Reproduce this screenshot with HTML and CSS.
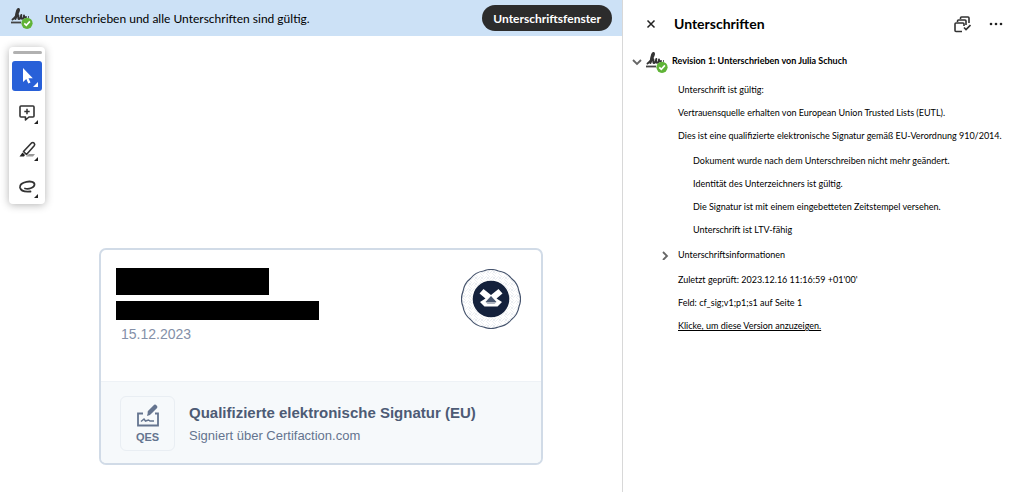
FILE: index.html
```
<!DOCTYPE html>
<html lang="de">

<head>
    <meta charset="UTF-8">
    <meta name="viewport" content="width=device-width, initial-scale=1.0">
    <title>Unterschriften</title>
    <link rel="stylesheet" href="styles.css">
</head>

<body>
    <!-- Shared signature icon -->
    <svg class="sprite" aria-hidden="true">
        <symbol id="signed" viewBox="0 0 22 22">
            <path d="M1.500 12.500C4 11 8.500 5 8 2.500C7 0 5 5 4.500 12C5.500 9 6.500 7.500 7.300 8C8 8.500 6.500 12 8 12C9.500 12 10 9.500 10.300 8C10 10.500 10 12 11.200 11.800C12.500 11.500 13 9.500 13 8.500C13 10.500 14 11 15 10" fill="none" stroke="#333" stroke-width="1.900" stroke-linecap="round" stroke-linejoin="round"/>
            <path d="M17 10h1" stroke="#333" stroke-width="1.600"/>
            <path d="M0 15.500h10" stroke="#444" stroke-width="1.800"/>
            <circle cx="16" cy="16.300" r="5.600" fill="#5fb336"/>
            <path d="M13.300 16.400l2 2 3.600-4" fill="none" stroke="#fff" stroke-width="1.600"/>
        </symbol>
    </svg>

    <div class="app">
        <main class="document">
            <header class="banner">
                <svg class="signed-icon"><use href="#signed"/></svg>
                <p class="banner-text">Unterschrieben und alle Unterschriften sind gültig.</p>
                <button class="banner-button" type="button">Unterschriftsfenster</button>
            </header>

            <div class="canvas">
                <div class="toolbar">
                    <span class="handle"></span>
                    <button class="tool active" type="button" aria-label="Auswählen">
                        <svg viewBox="0 0 30 30">
                            <path d="M11 7v14l3.300-3 2 4.600 2.200-1-2-4.400h4.300z" fill="#fff"/>
                            <path d="M26 21v5h-5z" fill="#fff"/>
                        </svg>
                    </button>
                    <button class="tool" type="button" aria-label="Kommentar">
                        <svg viewBox="0 0 30 30">
                            <path d="M9 8h12q1 0 1 1v9q0 1-1 1h-4l-3.500 3v-3H9q-1 0-1-1V9q0-1 1-1z" fill="none" stroke="#333" stroke-width="1.600" stroke-linejoin="round"/>
                            <path d="M15 10.800v5.400M12.300 13.500h5.400" stroke="#333" stroke-width="1.500"/>
                            <path d="M26 22v4h-4z" fill="#222"/>
                        </svg>
                    </button>
                    <button class="tool" type="button" aria-label="Markieren">
                        <svg viewBox="0 0 30 30">
                            <path d="M14 21.500l3-2.500h6l-2 2.500z" fill="#999"/>
                            <path d="M11.500 16.500l8-8.500q1.500-1 2.700.2 1 1.200 0 2.600l-7.700 8.700z" fill="none" stroke="#333" stroke-width="1.600" stroke-linejoin="round"/>
                            <path d="M10.500 17.500l2.500 2.500-1 1.500H7.500z" fill="#222"/>
                            <path d="M26 22v4h-4z" fill="#222"/>
                        </svg>
                    </button>
                    <button class="tool" type="button" aria-label="Freihand">
                        <svg viewBox="0 0 30 30">
                            <path d="M13 16.500c4 1 9.500-1 9.500-4 0-2.800-4-3.500-8-2.700-4.500.8-7 3.200-6.500 5.700.8 3.500 5.500 4.500 10.500 4" fill="none" stroke="#333" stroke-width="1.800" stroke-linecap="round"/>
                            <path d="M26 22v4h-4z" fill="#222"/>
                        </svg>
                    </button>
                </div>

                <section class="card">
                    <div class="card-top">
                        <div class="signer">
                            <span class="redacted name"></span>
                            <span class="redacted mail"></span>
                            <time class="date" datetime="2023-12-15">15.12.2023</time>
                        </div>
                        <svg class="seal" viewBox="0 0 60 60" aria-hidden="true">
                            <defs>
                                <pattern id="guilloche" width="6" height="6" patternUnits="userSpaceOnUse">
                                    <path d="M0 3q1.500-3 3 0t3 0M3 0q3 1.500 0 3t0 3" fill="none" stroke="#e3e6ec" stroke-width=".7"/>
                                </pattern>
                            </defs>
                            <path d="M58 22.500A20 20 0 0 1 58 37.500A20 20 0 0 1 50.500 50.500A20 20 0 0 1 37.500 58A20 20 0 0 1 22.500 58A20 20 0 0 1 9.500 50.500A20 20 0 0 1 2 37.500A20 20 0 0 1 2 22.500A20 20 0 0 1 9.500 9.500A20 20 0 0 1 22.500 2A20 20 0 0 1 37.500 2A20 20 0 0 1 50.500 9.500A20 20 0 0 1 58 22.500Z" fill="url(#guilloche)" stroke="#46546d" stroke-width="1.200"/>
                            <circle cx="30" cy="30" r="18.300" fill="#14213c"/>
                            <path d="M18.500 24.500l4-4.500 7.500 6 7.500-6 4 4.500-6 5 5.500 3.500-4.500 4.500H23.500L19 33l5.500-3.500z" fill="#fff"/>
                            <path d="M30 27l5.500 6h-11z" fill="#46546d"/>
                            <path d="M24.500 33h11l-2 2h-7z" fill="#adb3bf"/>
                        </svg>
                    </div>
                    <div class="card-bottom">
                        <div class="badge">
                            <svg viewBox="0 0 24 24" aria-hidden="true">
                                <path d="M7 9.500H2v12h20v-12h-3" fill="none" stroke="#64748f" stroke-width="1.800"/>
                                <path d="M5 17.500l3-2.500 1.500 2 3-1 1.500 1h4" fill="none" stroke="#64748f" stroke-width="1.500"/>
                                <path d="M11 12l1-4 2.700 2.700z" fill="#64748f"/>
                                <path d="M14 8l5-5" stroke="#64748f" stroke-width="4.500" stroke-linecap="round"/>
                            </svg>
                            <span>QES</span>
                        </div>
                        <div class="card-info">
                            <h2>Qualifizierte elektronische Signatur (EU)</h2>
                            <p>Signiert über Certifaction.com</p>
                        </div>
                    </div>
                </section>
            </div>
        </main>

        <aside class="panel">
            <header class="panel-header">
                <button class="icon-button" type="button" aria-label="Schließen">
                    <svg width="10" height="10" viewBox="0 0 10 10"><path d="M1.500 1.500l7 7M8.500 1.500l-7 7" stroke="#222" stroke-width="1.500"/></svg>
                </button>
                <h1>Unterschriften</h1>
                <button class="icon-button" type="button" aria-label="Alle prüfen">
                    <svg width="18" height="18" viewBox="0 0 18 18" fill="none" stroke="#333" stroke-width="1.600">
                        <path d="M9 16.500H3q-1 0-1-1V9q0-1 1-1h7q1 0 1 1v2"/>
                        <path d="M4.500 7V6q0-1 1-1H12q1 0 1 1v4"/>
                        <path d="M7.500 4V3q0-1 1-1H15q1 0 1 1v5"/>
                        <path d="M11 12.500l2 2 4.500-4.500"/>
                    </svg>
                </button>
                <button class="icon-button" type="button" aria-label="Mehr">
                    <svg width="14" height="14" viewBox="0 0 14 14" fill="#222"><circle cx="2" cy="7" r="1.300"/><circle cx="7" cy="7" r="1.300"/><circle cx="12" cy="7" r="1.300"/></svg>
                </button>
            </header>

            <div class="revision">
                <button class="toggle" type="button" aria-label="Einklappen">
                    <svg width="10" height="10" viewBox="0 0 10 10"><path d="M1 3l4 4 4-4" fill="none" stroke="#666" stroke-width="1.800"/></svg>
                </button>
                <svg class="signed-icon"><use href="#signed"/></svg>
                <h2>Revision 1: Unterschrieben von Julia Schuch</h2>
            </div>

            <div class="details">
                <ul>
                    <li>Unterschrift ist gültig:</li>
                    <li>Vertrauensquelle erhalten von European Union Trusted Lists (EUTL).</li>
                    <li>Dies ist eine qualifizierte elektronische Signatur gemäß EU-Verordnung 910/2014.</li>
                </ul>
                <ul class="indented">
                    <li>Dokument wurde nach dem Unterschreiben nicht mehr geändert.</li>
                    <li>Identität des Unterzeichners ist gültig.</li>
                    <li>Die Signatur ist mit einem eingebetteten Zeitstempel versehen.</li>
                    <li>Unterschrift ist LTV-fähig</li>
                </ul>
                <ul class="expandable">
                    <li>
                        <button class="toggle" type="button" aria-label="Ausklappen">
                            <svg width="10" height="10" viewBox="0 0 10 10"><path d="M3 2l4 4-4 4" fill="none" stroke="#666" stroke-width="1.800"/></svg>
                        </button>
                        Unterschriftsinformationen
                    </li>
                </ul>
                <ul>
                    <li>Zuletzt geprüft: 2023.12.16 11:16:59 +01'00'</li>
                    <li>Feld: cf_sig;v1;p1;s1 auf Seite 1</li>
                    <li><a href="#">Klicke, um diese Version anzuzeigen.</a></li>
                </ul>
            </div>
        </aside>
    </div>
</body>

</html>
```
FILE: styles.css
```
* {
    box-sizing: border-box;
}

body {
    margin: 0;
    font-family: Lato, "Noto Sans", sans-serif;
    color: #000;
    background-color: #fff;
}

h1, h2, p, ul {
    margin: 0;
    padding: 0;
}

ul {
    list-style: none;
}

button {
    padding: 0;
    border: none;
    background: none;
    font-family: inherit;
    color: inherit;
    cursor: pointer;
}

svg {
    display: block;
    flex-shrink: 0;
}

.sprite {
    position: absolute;
    width: 0;
    height: 0;
}

.app {
    display: grid;
    grid-template-columns: minmax(0, 1fr) 402px;
    min-height: 100vh;
}

/* Document side */
.banner {
    display: flex;
    align-items: center;
    height: 36px;
    padding: 0 10px 0 11px;
    background-color: #cce1f6;
}

.signed-icon {
    width: 22px;
    height: 22px;
}

.banner-text {
    flex: 1;
    margin-left: 12px;
    font-size: 12px;
}

.banner-button {
    height: 26px;
    padding: 0 11px;
    border-radius: 13px;
    background-color: #2c2c2c;
    color: #fff;
    font-size: 12px;
    font-weight: bold;
}

.canvas {
    display: flex;
    align-items: flex-start;
    gap: 54px;
    padding: 11px 9px;
}

.toolbar {
    display: flex;
    flex-direction: column;
    align-items: center;
    gap: 7px;
    width: 36px;
    padding: 4px 3px 2px;
    border-radius: 4px;
    background-color: #fff;
    box-shadow: 0 1px 8px rgba(0, 0, 0, 0.3);
}

.handle {
    width: 29px;
    height: 3px;
    border-radius: 2px;
    background-color: #b1b1b1;
}

.tool {
    width: 30px;
    height: 30px;
    border-radius: 3px;
}

.tool.active {
    background-color: #2860d8;
}

.card {
    flex: 1;
    max-width: 444px;
    margin-top: 201px;
    border: 2px solid #d1dbe7;
    border-radius: 7px;
    overflow: hidden;
    font-family: "Liberation Sans", Arial, sans-serif;
    color: #64748f;
}

.card-top {
    display: flex;
    justify-content: space-between;
    height: 131px;
    padding: 18px 20px 0 15px;
}

.signer {
    display: flex;
    flex-direction: column;
}

.redacted {
    background-color: #000;
}

.name {
    width: 153px;
    height: 27px;
}

.mail {
    width: 203px;
    height: 19px;
    margin-top: 6px;
}

.date {
    margin: 6px 0 0 5px;
    font-size: 14px;
    line-height: 16px;
    color: #8490a8;
}

.seal {
    width: 60px;
    height: 60px;
    margin-top: 1px;
}

.card-bottom {
    display: flex;
    align-items: center;
    gap: 14px;
    padding: 14px 19px 12px;
    border-top: 1px solid #eef2f6;
    background-color: #f6f9fb;
}

.badge {
    display: flex;
    flex-direction: column;
    align-items: center;
    justify-content: center;
    gap: 3px;
    width: 55px;
    height: 55px;
    border: 1px solid #e9eef3;
    border-radius: 6px;
    font-size: 11px;
    line-height: 12px;
    font-weight: bold;
}

.badge svg {
    width: 24px;
    height: 24px;
}

.card-info h2 {
    font-size: 15px;
    line-height: 20px;
    color: #4d5b75;
}

.card-info p {
    margin-top: 4px;
    font-size: 13px;
    line-height: 18px;
}

/* Signature panel */
.panel {
    border-left: 1px solid #d8d8d8;
    padding: 9px 14px;
}

.panel-header {
    display: flex;
    align-items: center;
    gap: 18px;
    height: 30px;
    padding: 0 7px 0 9px;
}

.panel-header h1 {
    flex: 1;
    font-size: 14px;
    line-height: 16px;
    padding-bottom: 1px;
}

.revision {
    display: flex;
    align-items: center;
    gap: 4px;
    height: 24px;
    margin-top: 11px;
    margin-left: -5px;
}

.revision h2 {
    padding-bottom: 3px;
    font-size: 9px;
    line-height: 14px;
}

.details {
    display: flex;
    flex-direction: column;
    gap: 2px;
    padding: 4px 0 0 41px;
    font-size: 9px;
    line-height: 23px;
    white-space: nowrap;
}

.indented {
    padding-left: 15px;
}

.expandable li {
    display: flex;
    align-items: center;
    gap: 8px;
    margin-left: -18px;
}

.details a {
    color: inherit;
    text-decoration: underline;
    text-decoration-thickness: 1px;
}
```
